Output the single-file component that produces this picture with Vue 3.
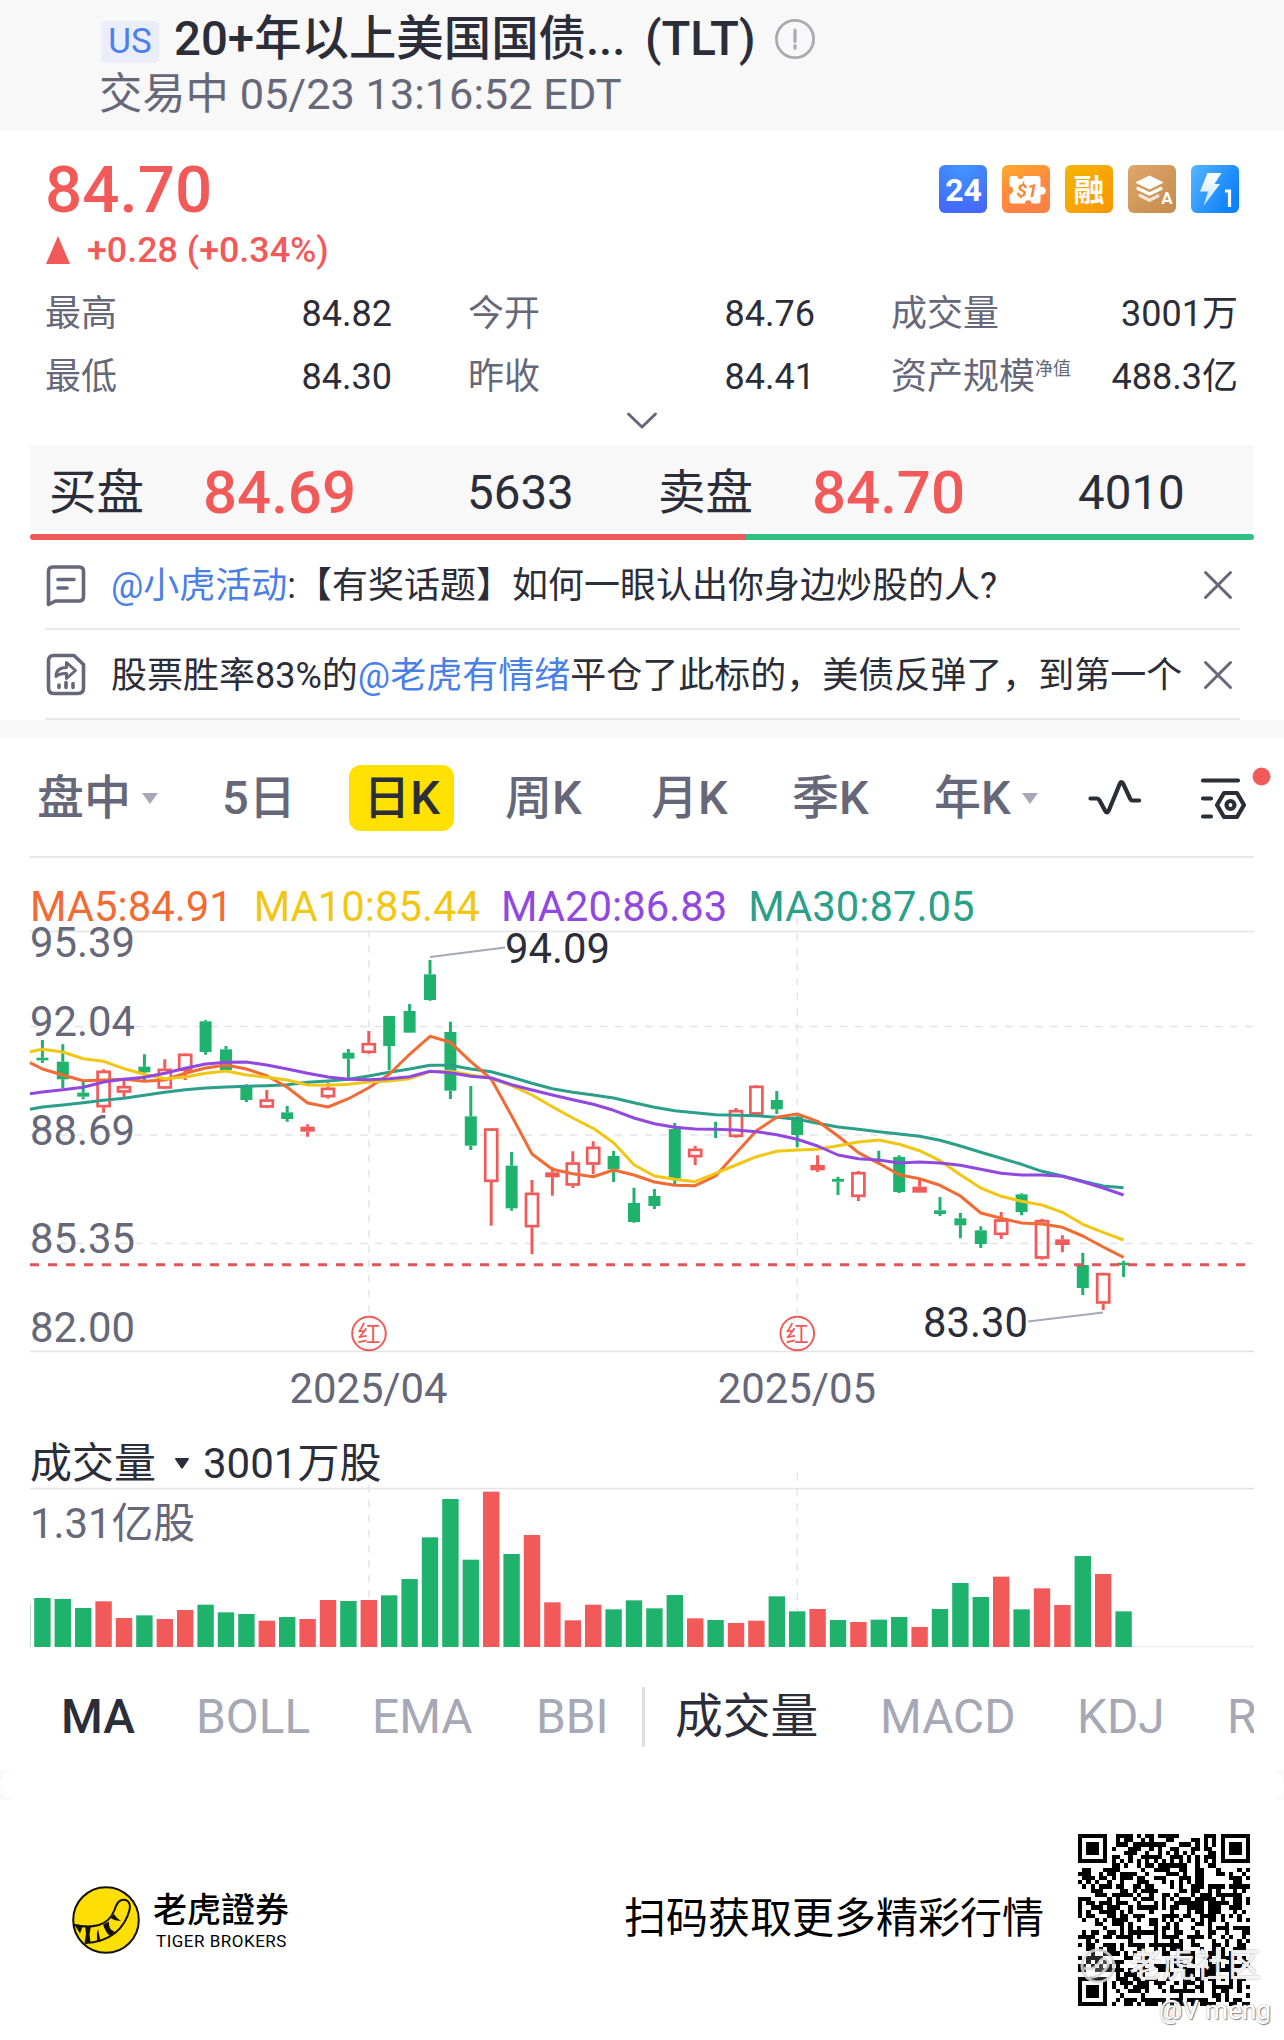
<script setup>
import { computed } from 'vue'

const STEP = 20.4
const FIRST_X = 42.4

const stats = [
  { label: '最高', value: '84.82' },
  { label: '今开', value: '84.76' },
  { label: '成交量', value: '3001万' },
  { label: '最低', value: '84.30' },
  { label: '昨收', value: '84.41' },
  { label: '资产规模', sup: '净值', value: '488.3亿' },
]

const periods = [
  { label: '盘中', arrow: true },
  { label: '5日' },
  { label: '日K', active: true },
  { label: '周K' },
  { label: '月K' },
  { label: '季K' },
  { label: '年K', arrow: true },
]

const legend = [
  { key: 'ma5', text: 'MA5:84.91' },
  { key: 'ma10', text: 'MA10:85.44' },
  { key: 'ma20', text: 'MA20:86.83' },
  { key: 'ma30', text: 'MA30:87.05' },
]

const indicators = ['MA', 'BOLL', 'EMA', 'BBI', '成交量', 'MACD', 'KDJ', 'RSI']

const priceLabels = [
  { text: '95.39', y: 77 },
  { text: '92.04', y: 156 },
  { text: '88.69', y: 265 },
  { text: '85.35', y: 373 },
  { text: '82.00', y: 462 },
]

const months = [
  { text: '2025/04', x: 369, top: 50 },
  { text: '2025/05', x: 797.3, top: 38 },
]

// type (g: down, r: up), high, body top, body bottom, low, volume top
// vertical values are in thirds of a pixel
const raw = [
  ['g', 480, 533, 541, 549, 534],
  ['g', 493, 545, 598, 624, 537],
  ['g', 603, 638, 650, 658, 564],
  ['r', 568, 572, 682, 698, 544],
  ['r', 600, 618, 638, 655, 594],
  ['g', 523, 560, 577, 600, 586],
  ['r', 538, 566, 626, 628, 597],
  ['r', 520, 521, 573, 600, 570],
  ['g', 420, 424, 516, 524, 554],
  ['g', 498, 508, 570, 570, 577],
  ['g', 613, 620, 660, 666, 582],
  ['r', 630, 658, 683, 685, 602],
  ['g', 678, 697, 717, 725, 591],
  ['r', 733, 740, 755, 770, 597],
  ['r', 608, 623, 652, 656, 540],
  ['g', 507, 518, 536, 598, 543],
  ['r', 453, 489, 519, 521, 540],
  ['g', 408, 408, 498, 570, 526],
  ['g', 372, 393, 458, 458, 477],
  ['g', 240, 283, 360, 362, 352],
  ['g', 425, 456, 632, 657, 237],
  ['g', 618, 709, 797, 810, 419],
  ['r', 745, 745, 906, 1037, 215],
  ['g', 816, 857, 985, 992, 402],
  ['r', 900, 938, 1042, 1123, 345],
  ['r', 862, 877, 892, 947, 547],
  ['r', 814, 847, 917, 924, 601],
  ['r', 784, 800, 854, 882, 554],
  ['g', 813, 828, 868, 906, 568],
  ['g', 923, 969, 1026, 1028, 541],
  ['g', 927, 948, 978, 987, 565],
  ['g', 729, 747, 896, 912, 525],
  ['r', 798, 806, 832, 855, 595],
  ['g', 725, 747, 750, 774, 600],
  ['r', 684, 690, 771, 773, 609],
  ['r', 615, 617, 704, 705, 602],
  ['g', 633, 660, 688, 702, 529],
  ['g', 708, 710, 765, 802, 574],
  ['r', 826, 855, 871, 876, 567],
  ['g', 890, 897, 905, 945, 600],
  ['r', 873, 876, 951, 963, 606],
  ['g', 812, 840, 843, 846, 599],
  ['g', 826, 831, 936, 939, 591],
  ['r', 898, 920, 938, 938, 621],
  ['g', 951, 991, 1002, 1008, 567],
  ['g', 999, 1015, 1036, 1075, 489],
  ['g', 1039, 1051, 1092, 1104, 531],
  ['r', 996, 1018, 1065, 1077, 470],
  ['g', 940, 943, 996, 1006, 568],
  ['r', 1016, 1020, 1136, 1139, 505],
  ['r', 1066, 1078, 1095, 1117, 555],
  ['g', 1119, 1155, 1224, 1245, 408],
  ['r', 1178, 1179, 1271, 1290, 462],
  ['g', 1142, 1148, 1156, 1191, 574],
]

// the first value of each average sits on the left edge of the plot
const averages = {
  ma30: [688, 681, 675, 668, 661, 655, 646, 637, 629, 624, 621, 619, 617, 614, 607, 603, 598, 588, 577, 567, 556, 556, 567, 575, 592, 610, 626, 637, 645, 654, 668, 682, 692, 698, 704, 706, 707, 712, 718, 730, 741, 748, 755, 762, 769, 781, 798, 817, 835, 853, 874, 888, 904, 918, 923],
  ma5: [548, 567, 585, 602, 600, 598, 604, 600, 580, 564, 555, 567, 587, 622, 669, 681, 656, 623, 583, 523, 469, 487, 545, 597, 707, 822, 868, 881, 890, 870, 885, 906, 916, 917, 888, 820, 752, 712, 702, 724, 768, 818, 850, 884, 896, 916, 948, 999, 1015, 1029, 1032, 1042, 1068, 1101, 1132],
  ma10: [515, 508, 516, 536, 544, 566, 583, 596, 591, 580, 573, 585, 592, 600, 615, 616, 613, 606, 603, 596, 575, 574, 585, 594, 617, 645, 680, 714, 745, 788, 854, 888, 898, 905, 880, 855, 830, 814, 810, 808, 797, 786, 780, 793, 812, 842, 884, 924, 949, 964, 975, 997, 1033, 1057, 1080],
  ma20: [641, 636, 629, 622, 606, 598, 592, 580, 565, 552, 547, 546, 555, 567, 580, 591, 598, 599, 596, 590, 574, 578, 589, 594, 614, 630, 645, 659, 673, 691, 714, 731, 742, 747, 748, 750, 755, 764, 778, 798, 825, 836, 840, 849, 846, 849, 856, 868, 880, 885, 885, 889, 905, 924, 945],
}

const candles = computed(() =>
  raw.map(([type, high, top, bottom, low, volume], i) => {
    const hollow = type === 'r' && bottom - top > 19
    const inset = hollow ? 1.2 : 0
    const half = type === 'r' ? 7.2 : 6
    return {
      x: FIRST_X + i * STEP,
      type,
      hollow,
      high: high / 3,
      low: low / 3,
      top: top / 3,
      bottom: bottom / 3,
      bx: FIRST_X + i * STEP - half + inset,
      bw: (half - inset) * 2,
      by: top / 3 + inset,
      bh: (bottom - top) / 3 - inset * 2,
      volume: volume / 3,
    }
  })
)

const lines = computed(() =>
  Object.entries(averages).map(([key, values]) => ({
    key,
    points: values
      .map((v, i) => `${i ? (FIRST_X + (i - 1) * STEP).toFixed(1) : 30},${(v / 3).toFixed(1)}`)
      .join(' '),
  }))
)

const QR_SIZE = 41

function inFinder(x, y) {
  const corners = [[0, 0], [QR_SIZE - 7, 0], [0, QR_SIZE - 7]]
  for (const [cx, cy] of corners) {
    const dx = x - cx
    const dy = y - cy
    if (dx >= -1 && dx <= 7 && dy >= -1 && dy <= 7) {
      const ring = Math.max(Math.abs(dx - 3), Math.abs(dy - 3))
      return ring === 3 || ring <= 1 ? 1 : 0
    }
  }
  const ring = Math.max(Math.abs(x - 34), Math.abs(y - 34))
  if (ring <= 2) {
    return ring === 1 ? 0 : 1
  }
  return null
}

const qrPath = computed(() => {
  let seed = 20250523
  let d = ''
  for (let y = 0; y < QR_SIZE; y++) {
    for (let x = 0; x < QR_SIZE; x++) {
      seed = (seed * 1103515245 + 12345) % 2147483648
      let on = inFinder(x, y)
      if (on === null) {
        on = x === 6 || y === 6 ? (x + y + 1) % 2 : (seed >> 12) % 100 < 50
      }
      if (on) {
        d += `M${x} ${y}h1v1h-1z`
      }
    }
  }
  return d
})
</script>

<template>
  <div class="page">
    <header class="header">
      <div class="title-row">
        <span class="market">US</span>
        <span class="title">20+年以上美国国债...</span>
        <span class="ticker">(TLT)</span>
        <svg class="info" viewBox="0 0 42 42">
          <circle cx="21" cy="21" r="18.6" fill="none" stroke="#a9abb1" stroke-width="2.8" />
          <path d="M21 12v11.5M21 27.6v2.6" stroke="#a9abb1" stroke-width="3.2" stroke-linecap="round" />
        </svg>
      </div>
      <div class="status">交易中 05/23 13:16:52 EDT</div>
    </header>

    <section class="quote">
      <div class="quote-top">
        <div>
          <div class="price">84.70</div>
          <div class="change">
            <svg class="up" viewBox="0 0 24 28"><path d="M12 0L24 28H0z" fill="#f25a5a" /></svg>
            <span>+0.28 (+0.34%)</span>
          </div>
        </div>
        <div class="badges">
          <svg viewBox="0 0 48 48">
            <defs>
              <radialGradient id="b1" cx=".5" cy="0" r="1">
                <stop offset="0" stop-color="#4097ff" />
                <stop offset="1" stop-color="#4568fa" />
              </radialGradient>
            </defs>
            <rect width="48" height="48" rx="6" fill="url(#b1)" />
            <text x="24.5" y="36" class="b-24">24</text>
          </svg>
          <svg viewBox="0 0 48 48">
            <defs>
              <linearGradient id="b2" x1="0" y1="0" x2=".4" y2="1">
                <stop offset="0" stop-color="#fbaa2c" />
                <stop offset=".5" stop-color="#ff8d3c" />
                <stop offset="1" stop-color="#ff8146" />
              </linearGradient>
            </defs>
            <rect width="48" height="48" rx="6" fill="url(#b2)" />
            <path
              d="M10 11h5.5a3 3 0 0 0 6 0H36a2.5 2.5 0 0 1 2.5 2.5V22a4 4 0 1 1 0 7.5V36a2.5 2.5 0 0 1-2.5 2.5h-6.5a3.3 3.3 0 0 0-6.6 0H10A2.5 2.5 0 0 1 7.5 36v-6.5a4.2 4.2 0 0 0 0-8.3v-7.7A2.5 2.5 0 0 1 10 11z"
              fill="#fff"
            />
            <text x="25" y="31.5" class="b-coupon">$1</text>
          </svg>
          <svg viewBox="0 0 48 48">
            <defs>
              <linearGradient id="b3" x1="0" y1="0" x2="1" y2="1">
                <stop offset="0" stop-color="#f3b604" />
                <stop offset="1" stop-color="#fb9603" />
              </linearGradient>
            </defs>
            <rect width="48" height="48" rx="6" fill="url(#b3)" />
            <text x="24" y="35.5" class="b-cjk">融</text>
          </svg>
          <svg viewBox="0 0 48 48">
            <defs>
              <linearGradient id="b4" x1="0" y1="0" x2="1" y2="1">
                <stop offset="0" stop-color="#e0a56a" />
                <stop offset="1" stop-color="#c58a4c" />
              </linearGradient>
            </defs>
            <rect width="48" height="48" rx="6" fill="url(#b4)" />
            <path d="M21.5 11L35 17.5 21.5 24 8 17.5z" fill="#fff" stroke="#fff" stroke-linejoin="round" />
            <path d="M10 23.5l11.5 5.5L33 23.5" class="b-layer" />
            <path d="M12 30.5l9.5 4.8 8.5-4.3" class="b-layer b-layer-dim" />
            <text x="39" y="38.5" class="b-a">A</text>
          </svg>
          <svg viewBox="0 0 48 48">
            <defs>
              <linearGradient id="b5" x1="0" y1="0" x2="1" y2=".6">
                <stop offset="0" stop-color="#55b5ff" />
                <stop offset="1" stop-color="#0c80fd" />
              </linearGradient>
              <linearGradient id="b5l" x1="0" y1="0" x2="0" y2="1">
                <stop offset="0" stop-color="#fff" />
                <stop offset="1" stop-color="#c5e2ff" />
              </linearGradient>
            </defs>
            <rect width="48" height="48" rx="6" fill="url(#b5)" />
            <path d="M16.5 8H30.5L23.5 19H29L12.5 41 17 26.5H9z" fill="url(#b5l)" />
            <path d="M34 26h4.5v16" fill="none" stroke="#fff" stroke-width="3.2" />
          </svg>
        </div>
      </div>

      <div class="stats">
        <div v-for="item in stats" :key="item.label" class="stat">
          <span class="stat-label">{{ item.label }}<span v-if="item.sup" class="sup">{{ item.sup }}</span></span>
          <span>{{ item.value }}</span>
        </div>
      </div>
      <svg class="expand" viewBox="0 0 36 36">
        <path d="M4.5 7L18 20 31.5 7" fill="none" stroke="#666779" stroke-width="3" stroke-linecap="round" stroke-linejoin="round" />
      </svg>
    </section>

    <section class="depth">
      <div class="depth-row">
        <span>买盘</span>
        <span class="depth-price">84.69</span>
        <span>5633</span>
        <span>卖盘</span>
        <span class="depth-price">84.70</span>
        <span>4010</span>
      </div>
      <div class="ratio"><i class="ratio-buy"></i><i class="ratio-sell"></i></div>
    </section>

    <section class="notices">
      <div class="notice">
        <svg class="notice-icon" viewBox="0 0 42 42">
          <path d="M8 3h26q4.5 0 4.5 4.5v25q0 4.5-4.5 4.5H10.5l-7 3.5V7.500Q3.500 3 8 3z" />
          <path d="M13 15.5h16M13 24h9" />
        </svg>
        <p><a>@小虎活动</a>:【有奖话题】如何一眼认出你身边炒股的人?</p>
        <svg class="close" viewBox="0 0 30 30"><path d="M2.5 2.5l25 25M27.5 2.5l-25 25" /></svg>
      </div>
      <div class="notice">
        <svg class="notice-icon" viewBox="0 0 42 42">
          <path d="M8.500 1.500h20.500l9.500 9V34q0 5.500-5.500 5.500H9q-5.500 0-5.500-5.500V7Q3.500 1.500 8.500 1.500z" />
          <path d="M11 22.500q0-9 10.500-9V8.500l9 8-9 8v-5q-7-.5-10.500 3z" class="fine" />
          <path d="M14 31v2.500M21 28.500V33.500M28 29.500v4" />
        </svg>
        <p>股票胜率83%的<a>@老虎有情绪</a>平仓了此标的，美债反弹了，到第一个</p>
        <svg class="close" viewBox="0 0 30 30"><path d="M2.5 2.5l25 25M27.5 2.5l-25 25" /></svg>
      </div>
    </section>
    <div class="band"></div>

    <nav class="periods">
      <span v-for="p in periods" :key="p.label" :class="['period', { 'period-active': p.active }]">
        {{ p.label }}<i v-if="p.arrow" class="period-arrow"></i>
      </span>
      <svg class="tool" viewBox="0 0 56 56">
        <path d="M3.500 28.500H10q1.500 0 2.300 1.500l5.700 10.500q2 4 3.800 0L32.700 14q1.700-4 3.600 0l7 15q.8 1.500 2.300 1.500h6.500" />
      </svg>
      <svg class="tool tool-settings" viewBox="0 0 68 56">
        <path d="M4 3.500h35M4 21.500h8M4 39.500h8" />
        <path d="M25 16h13l7 12-7 12H25l-7-12z" />
        <circle cx="31.500" cy="28" r="4" />
        <circle cx="62.500" cy="-.5" r="9" class="dot" />
      </svg>
    </nav>

    <section class="chart">
      <div class="legend">
        <span v-for="l in legend" :key="l.key" :class="l.key">{{ l.text }}</span>
      </div>
      <svg class="kline" viewBox="0 50 1284 490">
        <path d="M30 51.500H1254M30 471.500H1254" class="axis" />
        <path d="M30 146.500H1254M30 255H1254M30 363.500H1254" class="grid" />
        <path v-for="m in months" :key="m.text" :d="`M${m.x} ${m.top}V434`" class="grid" />

        <g v-for="c in candles" :key="c.x" :class="c.type">
          <path :d="`M${c.x} ${c.high}V${c.top}M${c.x} ${c.bottom}V${c.low}`" class="wick" />
          <rect :x="c.bx" :y="c.by" :width="c.bw" :height="c.bh" :class="c.hollow ? 'hollow' : 'solid'" />
        </g>
        <path d="M30 384.700H1248" class="last-price" />
        <polyline v-for="l in lines" :key="l.key" :points="l.points" :class="['average', l.key]" />

        <text v-for="p in priceLabels" :key="p.text" x="30" :y="p.y" class="label">{{ p.text }}</text>
        <path d="M430 77L505 67.500M1028 441.500L1103 432.500" class="pointer" />
        <text x="505" y="82.500" class="label extreme">94.09</text>
        <text x="923" y="457" class="label extreme">83.30</text>

        <g v-for="m in months" :key="m.text">
          <circle :cx="m.x" cy="453.500" r="16.800" class="dividend" />
          <text :x="m.x" y="461.500" class="dividend-text">红</text>
          <text :x="m.x - 0.5" y="523" class="label middle">{{ m.text }}</text>
        </g>
      </svg>

      <div class="volume-head">
        <span>成交量</span>
        <svg viewBox="0 0 14 11"><path d="M1 0h12q1.500 0 .7 1.400L8 10q-1 1.400-2 0L.3 1.400Q-.5 0 1 0z" fill="#2b2d38" /></svg>
        <span>3001万股</span>
      </div>
      <svg class="volume" viewBox="0 65 1284 165">
        <path d="M30 68.500H1254" class="axis" />
        <path d="M1113 226.500H1254" class="axis faint" />
        <path d="M369 65V227M797.300 53V227" class="grid" />
        <path d="M30.500 184V227" class="edge" />
        <rect v-for="c in candles" :key="c.x" :x="c.x - 8.2" :y="c.volume" width="16.4" :height="227 - c.volume" :class="['bar', c.type]" />
        <text x="30" y="117.500" class="label">1.31亿股</text>
      </svg>
    </section>

    <nav class="indicators">
      <span v-for="name in indicators" :key="name" :class="{ on: name === 'MA' || name === '成交量', split: name === '成交量' }">{{ name }}</span>
    </nav>
    <div class="seam"><i></i></div>

    <footer class="footer">
      <svg class="logo" viewBox="0 0 68 68">
        <circle cx="34" cy="34" r="32.800" fill="#fddf04" stroke="#14110a" stroke-width="2" />
        <path d="M2 39q14 3 25 0Q38 35.500 42.500 24q2.500-8 6-9.500 4-1.500 7 .5 3.500 3 2 9Q54 38 43 47 31 56.500 13 57" fill="none" stroke="#14110a" stroke-width="2" />
        <path d="M2 38l9 1.500-3 8zM13 39.500l6 1-1.500 7.500 1 8.500-6 .5 1.500-9zM26 43l2.500 12.500-3 .5q-1.500-7 .5-13zM31 38.500l6-3q-.5 5 2 8l4.500 3-5 4q-5-4-7.500-12zM38.500 32l3.500-4q3 5 7 7-6 0-10.500-3z" fill="#14110a" />
      </svg>
      <div class="brand">
        <strong>老虎證券</strong>
        <span>TIGER BROKERS</span>
      </div>
      <p class="scan">扫码获取更多精彩行情</p>
      <div class="qr">
        <svg viewBox="0 0 41 41" shape-rendering="crispEdges"><path :d="qrPath" /></svg>
        <div class="mark">
          <svg viewBox="0 0 36 36">
            <circle cx="18" cy="18" r="16" />
            <path d="M4 20q10 3 15-5 4-7 8-3t-4 12q-6 6-14 5" />
          </svg>
          <span>老虎社区</span>
        </div>
        <div class="author">@V meng</div>
      </div>
    </footer>
  </div>
</template>

<style>
body {
  margin: 0;
  background: #fff;
}
</style>

<style scoped>
.page {
  width: 1284px;
  height: 2040px;
  overflow: hidden;
  background: #fff;
  color: #2b2d38;
  font-family: Roboto, "Noto Sans CJK SC", sans-serif;
}

svg {
  display: block;
  overflow: visible;
}

.header {
  box-sizing: border-box;
  height: 131px;
  padding: 5px 0 0 101px;
  background: #f8f8f8;
}

.title-row {
  display: flex;
  align-items: center;
  height: 68px;
  font-size: 47.4px;
  font-weight: 500;
  line-height: 68px;
  white-space: pre;
}

.market {
  width: 58px;
  margin-top: 6px;
  border-radius: 5px;
  background: #e9eefa;
  color: #4b80ee;
  font-size: 35px;
  font-weight: 400;
  line-height: 42px;
  text-align: center;
}

.title {
  width: 471px;
  margin-left: 15px;
}

.ticker {
  width: 129px;
}

.info {
  width: 42px;
  height: 42px;
}

.status {
  margin-left: -2px;
  color: #666779;
  font-size: 43.3px;
  line-height: 43px;
}

.quote {
  height: 314px;
}

.quote-top {
  display: flex;
  justify-content: space-between;
  height: 152px;
  padding: 0 45px 0 46px;
}

.price {
  padding-top: 17px;
  margin-left: -1px;
  color: #f25a5a;
  font-size: 65.5px;
  font-weight: 500;
  line-height: 83px;
}

.change {
  display: flex;
  align-items: center;
  gap: 17px;
  color: #f25a5a;
  font-size: 35.8px;
  font-weight: 500;
  line-height: 39px;
}

.up {
  width: 24px;
  height: 28px;
  margin-top: -2px;
}

.badges {
  display: flex;
  gap: 15px;
  padding-top: 34px;
}

.badges svg {
  width: 48px;
  height: 48px;
}

.badges text {
  fill: #fff;
  text-anchor: middle;
}

.b-24 {
  font-size: 32px;
  font-weight: 700;
}

.badges .b-coupon {
  fill: #f5873b;
  font-size: 19px;
  font-style: italic;
  font-weight: 700;
}

.b-cjk {
  font-size: 31px;
  font-weight: 700;
}

.b-a {
  font-size: 17px;
  font-weight: 700;
}

.b-layer {
  fill: none;
  stroke: #fff;
  stroke-width: 3.2;
  stroke-linecap: round;
  stroke-linejoin: round;
}

.b-layer-dim {
  opacity: 0.75;
}

.stats {
  display: grid;
  grid-template-columns: repeat(3, 347px);
  column-gap: 76px;
  padding-left: 45px;
}

.stat {
  display: flex;
  justify-content: space-between;
  font-size: 36px;
  line-height: 63px;
}

.stat-label {
  display: flex;
  color: #666779;
}

.sup {
  font-size: 18px;
  line-height: 46px;
}

.expand {
  width: 36px;
  height: 36px;
  margin: -2px auto 0;
}

.depth {
  height: 95px;
  padding: 0 30px;
}

.depth-row {
  display: grid;
  grid-template-columns: 154px 264px 191px 154px 266px 180px;
  box-sizing: border-box;
  height: 85px;
  padding: 10px 0 0 19px;
  background: #f8f8f8;
  font-size: 47.5px;
  line-height: 76px;
}

.depth-price {
  color: #f25a5a;
  font-size: 60px;
  font-weight: 500;
}

.ratio {
  display: flex;
  height: 6px;
  margin-top: 4px;
  overflow: hidden;
  border-radius: 3px;
}

.ratio-buy {
  width: 715px;
  background: #f25a5a;
}

.ratio-sell {
  flex: 1;
  background: #2fc182;
}

.notice {
  display: flex;
  align-items: center;
  box-sizing: border-box;
  height: 90px;
  padding-top: 2px;
  margin: 0 44px 0 45px;
  border-bottom: 2px solid #e8e8ea;
}

.notice p {
  flex: 1;
  margin: 1px 0 0 24px;
  font-size: 36px;
  line-height: 50px;
  white-space: nowrap;
}

.notice a {
  color: #4b7fe8;
}

.notice-icon {
  width: 42px;
  height: 42px;
  fill: none;
  stroke: #666779;
  stroke-width: 3.6;
  stroke-linecap: round;
  stroke-linejoin: round;
}

.fine {
  stroke-width: 3;
}

.close {
  width: 30px;
  height: 30px;
  margin-right: 7px;
  fill: none;
  stroke: #666779;
  stroke-width: 3;
  stroke-linecap: round;
}

.band {
  height: 18px;
  background: #f8f8f8;
}

.periods {
  display: grid;
  grid-template-columns: 185px 127px 156px 146px 141px 142px 153px 111px 60px;
  align-items: center;
  box-sizing: border-box;
  height: 120px;
  padding: 2px 0 0 7px;
  margin: 0 30px;
  border-bottom: 2px solid #e8e8ea;
}

.period {
  display: flex;
  align-items: center;
  color: #666779;
  font-size: 47px;
  font-weight: 500;
  line-height: 66px;
}

.period-active {
  justify-content: center;
  width: 105px;
  border-radius: 12px;
  background: #ffe100;
  color: #2b2d38;
}

.period-arrow {
  margin-left: 11px;
  border: 8px solid transparent;
  border-top: 11px solid #a6a8b5;
  border-bottom: 0;
}

.tool {
  width: 56px;
  height: 56px;
  fill: none;
  stroke: #2b2d38;
  stroke-width: 4.2;
  stroke-linecap: round;
  stroke-linejoin: round;
}

.tool-settings {
  width: 68px;
  margin: 14px 0 0 1px;
}

.dot {
  fill: #f25a5a;
  stroke: none;
}

.legend {
  display: flex;
  gap: 21px;
  box-sizing: border-box;
  height: 72px;
  padding: 25px 0 0 30px;
  font-size: 41.8px;
  line-height: 47px;
}

.ma5 {
  color: #f26b34;
}

.ma10 {
  color: #f2c714;
}

.ma20 {
  color: #9148e0;
}

.ma30 {
  color: #2c9f8b;
}

.kline {
  width: 1284px;
  height: 490px;
}

.axis {
  stroke: #e2e3e6;
  stroke-width: 1.5;
}

.faint {
  opacity: 0.6;
}

.grid {
  fill: none;
  stroke: #e2e3e6;
  stroke-width: 1.5;
  stroke-dasharray: 7.5 7.5;
}

.g {
  fill: #1fb26d;
  stroke: #1fb26d;
}

.r {
  fill: #f25a5a;
  stroke: #f25a5a;
}

.wick {
  stroke-width: 3;
}

.solid {
  stroke: none;
}

.hollow {
  fill: none;
  stroke-width: 2.7;
}

.last-price {
  stroke: #e0555a;
  stroke-width: 3;
  stroke-dasharray: 9 9;
}

.average {
  fill: none;
  stroke: currentColor;
  stroke-width: 3;
  stroke-linejoin: round;
}

.label {
  fill: #666779;
  font-size: 41.8px;
}

.extreme {
  fill: #2b2d38;
}

.middle {
  text-anchor: middle;
}

.pointer {
  stroke: #a6a8b5;
  stroke-width: 2;
}

.dividend {
  fill: #fff;
  stroke: #f25a5a;
  stroke-width: 2;
}

.dividend-text {
  fill: #f25a5a;
  font-size: 23px;
  text-anchor: middle;
}

.volume-head {
  display: flex;
  align-items: center;
  box-sizing: border-box;
  height: 65px;
  padding: 22px 0 0 30px;
  font-size: 42px;
  line-height: 43px;
}

.volume-head svg {
  width: 14px;
  height: 11px;
  margin: 0 14px 0 19px;
}

.volume {
  width: 1284px;
  height: 165px;
}

.edge {
  stroke: #c9dcd3;
  stroke-width: 1;
}

.bar {
  stroke: none;
}

.indicators {
  display: grid;
  grid-template-columns: 135px 176px 164px 139px 205px 197px 150px 60px;
  align-items: center;
  box-sizing: border-box;
  width: 1254px;
  height: 120px;
  padding: 13px 0 0 61px;
  overflow: hidden;
  color: #a6a8b5;
  font-size: 47.8px;
  line-height: 60px;
}

.indicators .on {
  color: #2b2d38;
  font-weight: 500;
}

.indicators .split {
  position: relative;
  font-weight: 400;
}

.split::before {
  position: absolute;
  top: 0;
  left: -33px;
  width: 3px;
  height: 60px;
  background: #dfdfe3;
  content: '';
}

.seam {
  height: 30px;
  background: #f9f9f9;
}

.seam i {
  display: block;
  height: 30px;
  border-radius: 15px;
  background: #fff;
}

.footer {
  display: flex;
  align-items: center;
  height: 240px;
  padding-left: 72px;
  color: #000;
}

.logo {
  width: 68px;
  height: 68px;
}

.brand {
  display: flex;
  flex-direction: column;
  width: 471px;
  margin-left: 13px;
}

.brand strong {
  font-size: 34px;
  font-weight: 500;
  line-height: 41px;
}

.brand span {
  padding: 0 0 0 3px;
  font-size: 17px;
  letter-spacing: 0.5px;
  line-height: 20px;
}

.scan {
  width: 454px;
  margin: 0 0 2px;
  font-size: 42px;
  line-height: 50px;
}

.qr {
  position: relative;
}

.qr > svg {
  width: 172px;
  height: 172px;
}

.mark {
  position: absolute;
  top: 112px;
  left: 2px;
  display: flex;
  align-items: center;
  gap: 13px;
  color: rgba(255, 255, 255, 0.88);
  font-size: 33px;
  font-weight: 500;
  line-height: 40px;
  text-shadow: 0 0 2px rgba(110, 110, 110, 0.7);
  white-space: nowrap;
}

.mark svg {
  width: 36px;
  height: 36px;
  fill: rgba(255, 255, 255, 0.15);
  stroke: rgba(215, 215, 215, 0.85);
  stroke-width: 3;
}

.author {
  position: absolute;
  top: 161px;
  left: 81px;
  color: #fff;
  font-size: 26px;
  line-height: 30px;
  text-shadow: 1px 1px 1px #888, 0 0 2px #aaa;
  white-space: nowrap;
}
</style>
